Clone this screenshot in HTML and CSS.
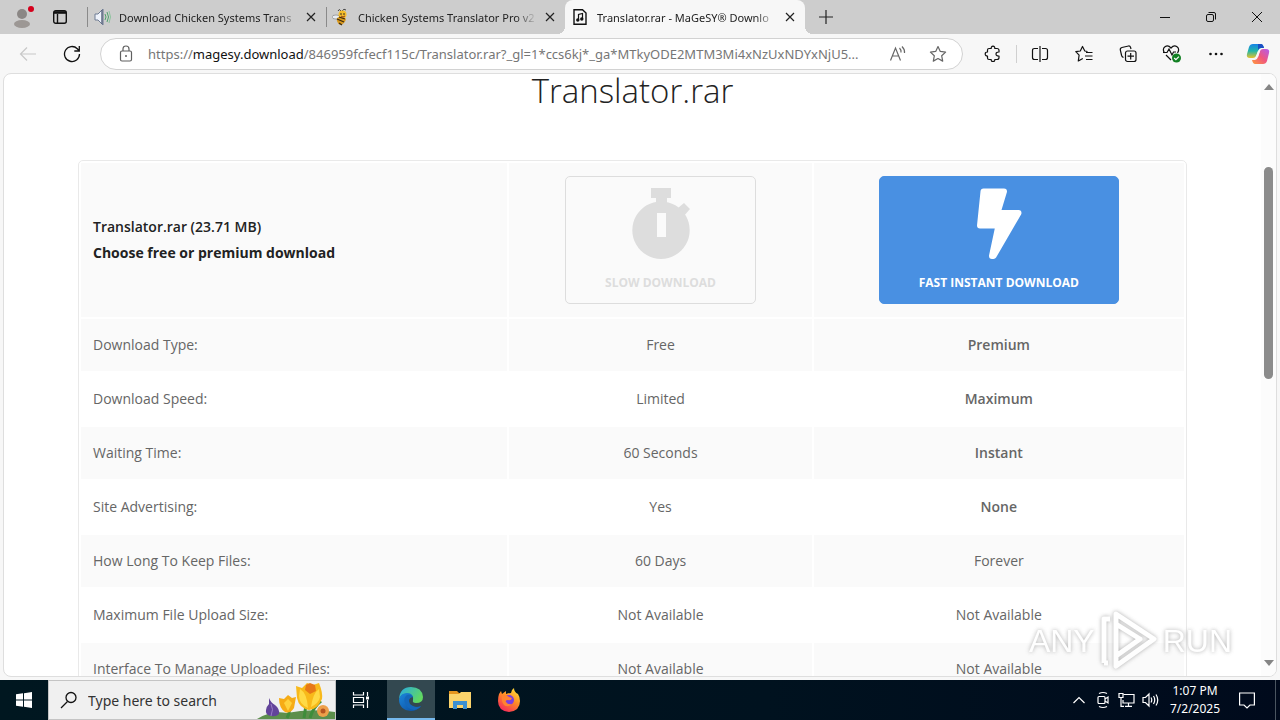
FILE: index.html
```html
<!DOCTYPE html>
<html lang="en">
<head>
    <meta charset="UTF-8">
    <meta name="viewport" content="width=device-width, initial-scale=1.0">
    <title>Translator.rar - MaGeSY® Download</title>
    <link rel="stylesheet" href="styles.css">
</head>
<body>
    <header class="tab-strip">
        <button class="profile" aria-label="Profile">
            <svg width="26" height="26" viewBox="0 0 26 26">
                <circle cx="14" cy="10" r="5" fill="#8b8785"/>
                <ellipse cx="14" cy="20" rx="8" ry="4" fill="#9c9794"/>
                <circle cx="23" cy="5" r="3" fill="#d5001c"/>
            </svg>
        </button>
        <button class="workspaces" aria-label="Tab actions">
            <svg width="16" height="16" viewBox="0 0 16 16" fill="none" stroke="#111" stroke-width="1.4">
                <rect x="1.7" y="1.7" width="12.6" height="12.6" rx="2"/>
                <path d="M2 3.500h12" stroke-width="2.6"/>
                <path d="M5.500 5v9"/>
            </svg>
        </button>
        <div class="tab">
            <svg width="18" height="18" viewBox="0 0 18 18" fill="none">
                <path d="M2 6h3l5-5v16l-5-5H2z" fill="#eef2fa" stroke="#6f7c94"/>
                <path d="M9 2v14" stroke="#55617a" stroke-width="1.4"/>
                <path d="M12 6q2 3 0 6M14 4q3 5 0 10" stroke="#4fa36b"/>
                <path d="M16 3q3 6 0 12" stroke="#8cc39d"/>
            </svg>
            <span class="tab-title">Download Chicken Systems Trans</span>
            <button class="tab-close" aria-label="Close tab">
                <svg width="10" height="10" viewBox="0 0 10 10" stroke="#222" stroke-width="1.2"><path d="M1 1l8 8M9 1L1 9"/></svg>
            </button>
        </div>
        <div class="tab">
            <svg width="18" height="18" viewBox="0 0 18 18">
                <path d="M6 3Q7 0 9 3M10 3q2-3 4-1" fill="none" stroke="#444"/>
                <ellipse cx="4" cy="9" rx="4" ry="2" fill="#e8edf5" stroke="#777" stroke-width=".6"/>
                <circle cx="10.500" cy="6.500" r="4" fill="#f5bd2c"/>
                <path d="M5 10q5-3 9 1-1 5-6 6-4-3-3-7z" fill="#d99a1e"/>
                <path d="M5 11l7 3M7 9l6 2M7 15l3 2" stroke="#3d2a10" stroke-width="1.3"/>
                <circle cx="9" cy="6" r=".8" fill="#222"/><circle cx="12" cy="6" r=".8" fill="#222"/>
                <path d="M9 8q2 2 4 0" fill="none" stroke="#93421a"/>
            </svg>
            <span class="tab-title">Chicken Systems Translator Pro v2</span>
            <button class="tab-close" aria-label="Close tab">
                <svg width="10" height="10" viewBox="0 0 10 10" stroke="#222" stroke-width="1.2"><path d="M1 1l8 8M9 1L1 9"/></svg>
            </button>
        </div>
        <div class="tab active">
            <svg width="18" height="18" viewBox="0 0 18 18" fill="none" stroke="#111" stroke-width="1.4">
                <path d="M3 1.700h8.500L15 5v11.300H3z"/>
                <path d="M7.500 12V6.500l4-1V11" stroke-width="1.200"/>
                <circle cx="6.800" cy="12" r="1" fill="#111"/><circle cx="10.800" cy="11" r="1" fill="#111"/>
            </svg>
            <span class="tab-title">Translator.rar - MaGeSY® Downlo</span>
            <button class="tab-close" aria-label="Close tab">
                <svg width="10" height="10" viewBox="0 0 10 10" stroke="#222" stroke-width="1.2"><path d="M1 1l8 8M9 1L1 9"/></svg>
            </button>
        </div>
        <button class="new-tab" aria-label="New tab">
            <svg width="14" height="14" viewBox="0 0 14 14" stroke="#222" stroke-width="1.2"><path d="M7 0v14M0 7h14"/></svg>
        </button>
        <div class="window-buttons">
            <button aria-label="Minimize"><svg width="12" height="12" viewBox="0 0 12 12" stroke="#111"><path d="M1 6.500h10"/></svg></button>
            <button aria-label="Restore"><svg width="12" height="12" viewBox="0 0 12 12" fill="none" stroke="#111"><rect x="1.500" y="3.500" width="7" height="7" rx="1.500"/><path d="M3.500 1.500H9q1.500 0 1.500 1.500v5.500"/></svg></button>
            <button aria-label="Close"><svg width="12" height="12" viewBox="0 0 12 12" stroke="#111"><path d="M1 1l10 10M11 1L1 11"/></svg></button>
        </div>
    </header>

    <nav class="toolbar">
        <button aria-label="Back">
            <svg width="18" height="18" viewBox="0 0 18 18" fill="none" stroke="#c8c8c8" stroke-width="1.200"><path d="M17 9H2M8 2.500L1.500 9 8 15.500"/></svg>
        </button>
        <button aria-label="Refresh">
            <svg width="18" height="18" viewBox="0 0 18 18" fill="none" stroke="#111" stroke-width="1.300"><path d="M16.500 9A7.500 7.500 0 1 1 14.300 3.700L16 5.500M16.300 1v5h-5"/></svg>
        </button>
        <div class="address-bar">
            <svg width="16" height="18" viewBox="0 0 16 18" fill="none" stroke="#5f5f5f" stroke-width="1.200"><rect x="2.500" y="6" width="11" height="10" rx="1.500"/><path d="M5 6V4q0-3 3-3t3 3v2"/><circle cx="8" cy="11" r="1" fill="#5f5f5f" stroke="none"/></svg>
            <a class="url" href="#">https://<span class="domain">magesy.download</span>/846959fcfecf115c/Translator.rar?_gl=1*ccs6kj*_ga*MTkyODE2MTM3Mi4xNzUxNDYxNjU5...</a>
            <button aria-label="Read aloud">
                <svg width="18" height="18" viewBox="0 0 18 18" fill="none" stroke="#666" stroke-width="1.200"><path d="M1.500 15.500L6.500 3l5 12.500M3.500 11h6M10.500 3q2 2 1.500 4.500M13 1.500q3 3 2.500 6.500"/></svg>
            </button>
            <button aria-label="Add to favorites">
                <svg width="18" height="18" viewBox="0 0 18 18" fill="none" stroke="#666" stroke-width="1.200" stroke-linejoin="round"><path d="M9 1.500l2.300 4.900 5.300.7-3.900 3.700 1 5.300L9 13.500l-4.700 2.600 1-5.300L1.400 7.100l5.300-.7z"/></svg>
            </button>
        </div>
        <div class="tools">
            <button aria-label="Extensions">
                <svg width="18" height="18" viewBox="0 0 18 18" fill="none" stroke="#111" stroke-width="1.200" stroke-linejoin="round"><path d="M5 3.500h2.200Q7 1.200 9 1.200t1.800 2.300H13q2 0 2 2V7q-3-.2-3 2t3 2v1.500q0 2-2 2h-2.200q.2 2-1.800 2t-1.800-2H5q-1.500 0-1.500-1.500v-2Q1.200 11 1.200 9t2.300-2V5q0-1.500 1.500-1.500z"/></svg>
            </button>
            <span class="separator"></span>
            <button aria-label="Split screen">
                <svg width="18" height="18" viewBox="0 0 18 18" fill="none" stroke="#111" stroke-width="1.200"><path d="M9 1v16M7 3.500H3.500q-2 0-2 2v7q0 2 2 2H7M11 3.500h3.500q2 0 2 2v7q0 2-2 2H11"/></svg>
            </button>
            <button aria-label="Favorites">
                <svg width="18" height="18" viewBox="0 0 18 18" fill="none" stroke="#111" stroke-width="1.200" stroke-linejoin="round"><path d="M12.500 6.500L9.800 6 7.500 1.500 5.300 6l-4.500.7 3.300 3.500L3.300 16l4.500-2.500M11 7.500h6.500M10 11h7.500M11 14.500h6.500"/></svg>
            </button>
            <button aria-label="Collections">
                <svg width="18" height="18" viewBox="0 0 18 18" fill="none" stroke="#111" stroke-width="1.200"><rect x="6.500" y="6" width="10.500" height="10.500" rx="2"/><path d="M11.700 8v6.500M8.500 11.200H15M4.500 12.500Q3 12 2.600 10.500L1.300 5q-.3-2 1.600-2.500L9.500 1q1.500-.2 2 1.200l.5 1.800"/></svg>
            </button>
            <button aria-label="Browser essentials">
                <svg width="20" height="20" viewBox="0 0 20 20" fill="none" stroke="#111" stroke-width="1.200"><path d="M2.500 9Q0 5 3 2.800T9 4q3-3.400 6-1.200T15.500 9M4 11l5 5M1 8.500h4l2-3.500 3 6 1.500-3H14"/><circle cx="14.500" cy="14" r="4.500" fill="#128023" stroke="none"/><path d="M12.200 14l1.700 1.700 3-3" stroke="#fff"/></svg>
            </button>
            <button aria-label="Settings and more">
                <svg width="16" height="16" viewBox="0 0 16 16" fill="#111"><circle cx="2.500" cy="8" r="1.300"/><circle cx="8" cy="8" r="1.300"/><circle cx="13.500" cy="8" r="1.300"/></svg>
            </button>
            <button aria-label="Copilot">
                <svg width="24" height="22" viewBox="0 0 24 22">
                    <defs>
                        <linearGradient id="cool" x1="0" y1="0" x2="0" y2="1"><stop offset="0" stop-color="#1683e8"/><stop offset=".5" stop-color="#22b6a8"/><stop offset="1" stop-color="#e8c22c"/></linearGradient>
                        <linearGradient id="warm" x1="1" y1="0" x2="0" y2="1"><stop offset="0" stop-color="#b25cf0"/><stop offset=".5" stop-color="#f0567f"/><stop offset="1" stop-color="#ff9a3c"/></linearGradient>
                    </defs>
                    <path d="M7 1h8q2 0 3 4h-3q-2 0-3 3l-2 5q-1 2-3 2H4q-4 0-3-4l2-7q1-3 4-3z" fill="url(#cool)"/>
                    <path d="M17 21H9q-2 0-3-4h3q2 0 3-3l2-6q1-2 3-2h3q4 0 3 4l-2 8q-1 3-4 3z" fill="url(#warm)"/>
                    <path d="M12 1h3q2 0 3 4h-3q-2 0-3 2z" fill="#1b4fc4"/>
                    <path d="M12 8h2l-2 6h-2z" fill="#f7f7f7"/>
                </svg>
            </button>
        </div>
    </nav>

    <main class="viewport">
        <div class="page">
            <h1>Translator.rar</h1>
            <table class="compare">
                <colgroup>
                    <col class="col-feature">
                    <col class="col-free">
                    <col class="col-premium">
                </colgroup>
                <thead>
                    <tr>
                        <th class="file-info" scope="col">
                            <span class="file-name">Translator.rar (23.71 MB)</span>
                            <span class="file-choice">Choose free or premium download</span>
                        </th>
                        <th scope="col">
                            <a class="download slow" href="#">
                                <svg width="60" height="72" viewBox="0 0 60 72" fill="currentColor">
                                    <path d="M20 0h20v10h-4v6H25v-6h-5zM47 20l6-5 6 6-7 8z"/>
                                    <path fill-rule="evenodd" d="M30 13.500a28.700 28.700 0 1 0 .01 0zM26 25h9v24h-9z"/>
                                </svg>
                                Slow Download
                            </a>
                        </th>
                        <th scope="col">
                            <a class="download fast" href="#">
                                <svg width="48" height="72" viewBox="0 0 48 72" fill="currentColor" stroke="currentColor" stroke-width="6" stroke-linejoin="round">
                                    <path d="M8.500 3.500H29L22.500 25H43.500L18.500 68H17L23.500 37.500H5z"/>
                                </svg>
                                Fast Instant Download
                            </a>
                        </th>
                    </tr>
                </thead>
                <tbody>
                    <tr><td>Download Type:</td><td>Free</td><td><strong>Premium</strong></td></tr>
                    <tr><td>Download Speed:</td><td>Limited</td><td><strong>Maximum</strong></td></tr>
                    <tr><td>Waiting Time:</td><td>60 Seconds</td><td><strong>Instant</strong></td></tr>
                    <tr><td>Site Advertising:</td><td>Yes</td><td><strong>None</strong></td></tr>
                    <tr><td>How Long To Keep Files:</td><td>60 Days</td><td>Forever</td></tr>
                    <tr><td>Maximum File Upload Size:</td><td>Not Available</td><td>Not Available</td></tr>
                    <tr><td>Interface To Manage Uploaded Files:</td><td>Not Available</td><td>Not Available</td></tr>
                </tbody>
            </table>
        </div>
        <div class="scrollbar">
            <span class="arrow-up"></span>
            <div class="track"><div class="thumb"></div></div>
            <span class="arrow-down"></span>
        </div>
    </main>

    <div class="watermark">
        <span>ANY</span>
        <svg width="60" height="66" viewBox="0 0 60 66" fill="none" stroke="#fff" stroke-width="5" stroke-linejoin="round">
            <path d="M17 48V6l38 25-38 27V48l24-17-24-15"/>
            <path d="M5 55V11h6M5 55h4"/>
        </svg>
        <span>RUN</span>
    </div>

    <footer class="taskbar">
        <button class="task start" aria-label="Start">
            <svg width="16" height="16" viewBox="0 0 16 16" fill="#fff"><path d="M0 2.300l7-1v6.200H0zM8 1.200L16 0v7.500H8zM0 8.500h7v6.200l-7-1zM8 8.500h8V16l-8-1.200z"/></svg>
        </button>
        <div class="search">
            <svg width="18" height="18" viewBox="0 0 18 18" fill="none" stroke="#111" stroke-width="1.300"><circle cx="11" cy="6.500" r="5"/><path d="M7.500 10.500L1 17"/></svg>
            <input type="text" placeholder="Type here to search" aria-label="Type here to search">
            <svg width="80" height="38" viewBox="0 0 80 38">
                <path d="M2 38q14-9 30-6 24-5 48-1v7z" fill="#5c8f4c"/>
                <path d="M34 27q1 5-2 10M51 24l-2 13M66 20q-8 6-11 17" fill="none" stroke="#3e8d3b" stroke-width="3"/>
                <path d="M14 17q2 5 6 7 5 4 4 9-3 3-8 2-6-1-5-6 0-3 3-6z" fill="#62439a"/>
                <path d="M16 23q3 5 0 12" stroke="#9a7ac7" fill="none"/>
                <path d="M24 17l5 1 4-4 4 3 4-1-2 11q-4 6-9 4-6-4-6-14z" fill="#f6ac16"/>
                <path d="M33 18l4 4-4 8-4-8z" fill="#ffd23d"/>
                <path d="M41 5l6 2 5-5 6 2 6-2q4 10 3 16-5 11-13 11-10-2-12-12z" fill="#f8b91a"/>
                <path d="M45 8q7 4 8 19-9-4-9-12zM64 8q-6 4-8 18 8-4 9-10z" fill="#ffda45"/>
                <path d="M51 4l4-2 5 2 1 6-6 3-5-4z" fill="#e77816"/>
                <circle cx="68" cy="30" r="6" fill="#eea04a"/><circle cx="68" cy="30" r="2.500" fill="#b75520"/>
            </svg>
        </div>
        <button class="task" aria-label="Task view">
            <svg width="18" height="18" viewBox="0 0 18 18" fill="none" stroke="#fff" stroke-width="1.200"><path d="M1.500 1v3h10V1M1.500 17v-3h10v3M1.500 6.500h10v5h-10zM15.500 1v4M15.500 9v8"/><path d="M14 5.500h3v3h-3z" fill="#fff" stroke="none"/></svg>
        </button>
        <button class="task running" aria-label="Microsoft Edge">
            <svg width="24" height="24" viewBox="0 0 24 24">
                <defs>
                    <linearGradient id="edge-top" x1="0" y1="0" x2="1" y2=".5"><stop offset="0" stop-color="#25a9e8"/><stop offset="1" stop-color="#61d860"/></linearGradient>
                    <linearGradient id="edge-low" x1="0" y1="0" x2="1" y2="1"><stop offset="0" stop-color="#1b86dc"/><stop offset="1" stop-color="#0c4b9c"/></linearGradient>
                </defs>
                <path d="M0 12Q1 0 12 0t12 10q0 6-7 6-4 0-3-3 1-5-5-6Q3 6 0 12z" fill="url(#edge-top)"/>
                <path d="M0 12q2-6 8-6 5 0 6 4-4 0-4 4 0 6 7 6 3 0 5-1-4 5-10 5Q0 23 0 12z" fill="url(#edge-low)"/>
                <path d="M8 8q-4 3-2 8 2 6 9 7 5-1 7-4-4 2-8 0-5-2-4-7 1-2 4-2-2-3-6-2z" fill="#1467bb"/>
            </svg>
        </button>
        <button class="task" aria-label="File Explorer">
            <svg width="22" height="20" viewBox="0 0 22 20"><path d="M0 1h8l2 2h12v4H0z" fill="#e5951e"/><path d="M0 4h10l2-2h10v16H0z" fill="#fbd36b"/><path d="M4 11h14v8h-4v-4H8v4H4z" fill="#3b8fd0"/></svg>
        </button>
        <button class="task" aria-label="Firefox">
            <svg width="24" height="24" viewBox="0 0 24 24">
                <defs><linearGradient id="fox" x1=".8" y1="0" x2=".2" y2="1"><stop offset="0" stop-color="#ffe13a"/><stop offset=".45" stop-color="#ff8a26"/><stop offset="1" stop-color="#f5225f"/></linearGradient></defs>
                <path d="M2 6l2-3 1 3 4-3v3q3-1 5-1 0-3 3-5 0 4 4 6 2 3 2 7 0 10-11 11Q1 23 1 13q0-4 1-7z" fill="url(#fox)"/>
                <circle cx="12" cy="12" r="5" fill="#7b3fe0"/>
                <path d="M5 8q4-2 7 1l3 1q-1 3-4 2-3 0-2 2 2 3 6 2-4 4-8 1-3-3-2-9z" fill="#ff8330"/>
            </svg>
        </button>
        <div class="tray">
            <button aria-label="Show hidden icons"><svg width="12" height="8" viewBox="0 0 12 8" fill="none" stroke="#fff" stroke-width="1.200"><path d="M.5 7L6 1.500 11.500 7"/></svg></button>
            <button aria-label="Meet now"><svg width="14" height="18" viewBox="0 0 14 18" fill="none" stroke="#fff" stroke-width="1.200"><rect x="2" y="5.500" width="7" height="7" rx="1"/><path d="M9 8l3-2v6l-3-2M3 2.500q4-2 8 0M3 15.500q4 2 8 0"/></svg></button>
            <button aria-label="Network"><svg width="18" height="16" viewBox="0 0 18 16" fill="none" stroke="#fff" stroke-width="1.200"><path d="M5.500 2.500H16v8.500H5V8M10.500 11v3M7 14.400h7M3 6v8.400h3"/><path d="M1 1.500h4v4H1z"/></svg></button>
            <button aria-label="Volume"><svg width="18" height="16" viewBox="0 0 18 16" fill="none" stroke="#fff" stroke-width="1.200"><path d="M1 5.500h2.500L7 2v12l-3.500-3.500H1zM9 5.500q1.500 2.500 0 5M11.500 4q2.500 4 0 8M14 2.500q3.500 5.500 0 11"/></svg></button>
            <time class="clock" datetime="2025-07-02T13:07"><span>1:07 PM</span><span>7/2/2025</span></time>
            <button class="notifications" aria-label="Notifications"><svg width="16" height="17" viewBox="0 0 16 17" fill="none" stroke="#fff" stroke-width="1.200"><path d="M.6 1h14.800v12H11l-3 3-3-3H.6z"/></svg></button>
            <button class="show-desktop" aria-label="Show desktop"></button>
        </div>
    </footer>
</body>
</html>
```
FILE: styles.css
```css
* {
    box-sizing: border-box;
}
body {
    margin: 0;
    height: 100vh;
    display: flex;
    flex-direction: column;
    overflow: hidden;
    background: #f7f7f7;
    font-family: "Open Sans", sans-serif;
    font-size: 14px;
    color: #666;
}
button {
    display: flex;
    align-items: center;
    justify-content: center;
    padding: 0;
    border: none;
    background: none;
    font: inherit;
    cursor: pointer;
}
svg {
    flex: none;
}

/* tabs */
.tab-strip {
    display: flex;
    flex: none;
    height: 34px;
    background: #cdcdcd;
}
.profile {
    width: 41px;
}
.workspaces {
    width: 46px;
    padding-right: 8px;
}
.tab {
    display: flex;
    align-items: center;
    gap: 8px;
    width: 239px;
    padding: 0 10px 0 6px;
    background: linear-gradient(#8a8a8a, #8a8a8a) left center / 1px 20px no-repeat;
    color: #222;
    font-family: "Noto Sans", sans-serif;
    font-size: 11px;
}
.tab.active {
    position: relative;
    width: 240px;
    background: #f7f7f7;
    border-radius: 8px 8px 0 0;
}
.tab.active::before,
.tab.active::after {
    content: "";
    position: absolute;
    bottom: 0;
    width: 8px;
    height: 8px;
}
.tab.active::before {
    right: 100%;
    background: radial-gradient(circle at 0 0, #cdcdcd 8px, #f7f7f7 8px);
}
.tab.active::after {
    left: 100%;
    background: radial-gradient(circle at 100% 0, #cdcdcd 8px, #f7f7f7 8px);
}
.tab-title {
    flex: 1;
    overflow: hidden;
    white-space: nowrap;
    -webkit-mask-image: linear-gradient(to right, #000 88%, transparent);
    mask-image: linear-gradient(to right, #000 88%, transparent);
}
.new-tab {
    width: 42px;
}
.window-buttons {
    display: flex;
    margin-left: auto;
}
.window-buttons button {
    width: 46px;
}

/* toolbar */
.toolbar {
    display: flex;
    align-items: center;
    flex: none;
    height: 39px;
    padding: 0 2px 0 6px;
}
.toolbar > button {
    width: 44px;
}
.address-bar {
    display: flex;
    align-items: center;
    flex: 1;
    gap: 14px;
    min-width: 0;
    height: 32px;
    margin-left: 6px;
    padding: 0 11px 0 17px;
    background: #fff;
    border: 1px solid #d2d2d2;
    border-radius: 16px;
}
.address-bar button {
    width: 26px;
}
.url {
    flex: 1;
    overflow: hidden;
    white-space: nowrap;
    color: #767676;
    font-family: "Noto Sans", sans-serif;
    font-size: 13px;
    text-decoration: none;
}
.domain {
    color: #111;
}
.tools {
    display: flex;
    align-items: center;
    margin-left: 8px;
}
.tools button {
    width: 44px;
}
.tools button:last-child {
    width: 40px;
}
.separator {
    width: 1px;
    height: 18px;
    margin: 0 1px;
    background: #d0d0d0;
}

/* page */
.viewport {
    display: flex;
    flex: 1;
    min-height: 0;
    margin: 0 3px 3px;
    overflow: hidden;
    background: #fff;
    border: 1px solid #dedede;
    border-radius: 8px;
}
.page {
    flex: 1;
    padding: 0 74px;
}
h1 {
    margin: 0 0 52px;
    color: #222;
    font-size: 33px;
    font-weight: 300;
    line-height: 34px;
    text-align: center;
}
.compare {
    width: 100%;
    table-layout: fixed;
    border: 1px solid #e9e9e9;
    border-radius: 5px;
    border-collapse: separate;
    border-spacing: 2px;
    line-height: 26px;
    text-align: center;
}
.col-feature {
    width: 38.8%;
}
.col-free {
    width: 27.5%;
}
.compare th,
.compare td {
    padding: 13px 12px;
}
.compare th {
    background: #fafafa;
}
.compare tbody tr:nth-child(odd) td {
    background: #fafafa;
}
.compare td:first-child,
.compare .file-info {
    text-align: left;
}
.compare strong {
    font-weight: 600;
}
.file-info span {
    display: block;
    color: #222;
}
.file-name {
    font-weight: 600;
}
.download {
    display: inline-flex;
    flex-direction: column;
    align-items: center;
    gap: 10px;
    height: 128px;
    padding: 11px 39px 0;
    border: 1px solid;
    border-radius: 5px;
    font-size: 12px;
    font-weight: 700;
    text-decoration: none;
    text-transform: uppercase;
    vertical-align: middle;
}
.slow {
    border-color: #ddd;
    color: #ddd;
}
.fast {
    background: #4990e2;
    border-color: #4990e2;
    color: #fff;
}
.scrollbar {
    display: flex;
    flex-direction: column;
    align-items: center;
    width: 15px;
    padding: 10px 0;
    background: #fcfcfc;
}
.track {
    flex: 1;
    padding-top: 77px;
}
.thumb {
    width: 9px;
    height: 43%;
    background: #8b8b8b;
    border-radius: 5px;
}
.arrow-up,
.arrow-down {
    border: 5px solid transparent;
}
.arrow-up {
    border-top: 0;
    border-bottom: 6px solid #858585;
}
.arrow-down {
    border-bottom: 0;
    border-top: 6px solid #858585;
}

/* floating logo */
.watermark {
    position: absolute;
    right: 48px;
    bottom: 46px;
    display: flex;
    align-items: center;
    gap: 4px;
    color: #fff;
    font-family: "Liberation Sans", sans-serif;
    font-size: 32px;
    opacity: 0.8;
    filter: drop-shadow(0 0 2px #999);
    pointer-events: none;
}

/* taskbar */
.taskbar {
    display: flex;
    flex: none;
    height: 40px;
    background: linear-gradient(to right, #001720, #00121f 60%, #000a1c);
    color: #fff;
}
.task {
    width: 49px;
}
.start {
    width: 48px;
}
.running {
    width: 48px;
    margin-left: 2px;
    background: #334850;
    border-bottom: 2px solid #76b9ed;
}
.search {
    display: flex;
    align-items: center;
    width: 288px;
    padding-left: 11px;
    background: #f0f0f0;
    border: 1px solid #c4c4c4;
}
.search input {
    flex: 1;
    min-width: 0;
    padding: 0 0 0 10px;
    border: none;
    outline: none;
    background: none;
    font-family: "Noto Sans", sans-serif;
    font-size: 14px;
}
.search input::placeholder {
    color: #333;
}
.tray {
    display: flex;
    align-items: center;
    margin-left: auto;
}
.tray button {
    width: 24px;
}
.tray .notifications {
    width: 40px;
    margin-right: 8px;
}
.tray .show-desktop {
    width: 5px;
    height: 100%;
    border-left: 1px solid #4a5560;
}
.clock {
    display: flex;
    flex-direction: column;
    width: 64px;
    font-family: "Noto Sans", sans-serif;
    font-size: 12px;
    line-height: 18px;
    text-align: center;
}
```
